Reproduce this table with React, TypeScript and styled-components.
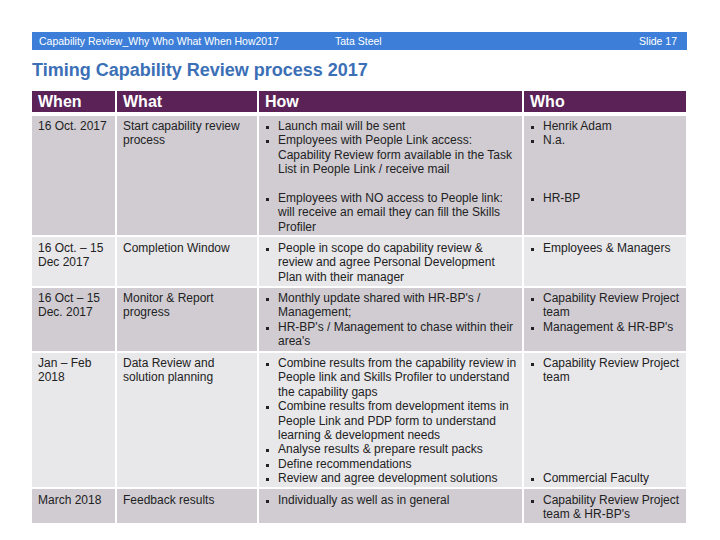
import React from "react";
import styled, { createGlobalStyle } from "styled-components";

const Global = createGlobalStyle`
  html, body { margin: 0; padding: 0; background: #ffffff; }
  body { font-family: "Liberation Sans", Arial, sans-serif; color: #222; }
`;

const Page = styled.div`
  width: 720px;
  height: 540px;
  box-sizing: border-box;
  padding: 32px 0 0 32px;
  display: flex;
  flex-direction: column;
`;

const TopBar = styled.div`
  width: 655px;
  height: 18px;
  background: #3d7fd8;
  color: #fff;
  font-size: 10.5px;
  display: flex;
  align-items: center;
  box-sizing: border-box;
  padding: 0 10px 0 7px;
`;

const BarLeft = styled.span`
  width: 296px;
`;

const BarMid = styled.span`
  flex: 1;
`;

const Title = styled.h1`
  margin: 9px 0 0 0;
  font-size: 18px;
  line-height: 22px;
  font-weight: bold;
  color: #3b6fb6;
`;

const Table = styled.div`
  margin-top: 10px;
  display: flex;
  flex-direction: column;
  gap: 2px;
  width: 654px;
`;

const Row = styled.div<{ $h: number; $head?: boolean }>`
  display: grid;
  grid-template-columns: 83px 140px 263px 162px;
  column-gap: 2px;
  height: ${(p) => p.$h}px;
  margin-bottom: ${(p) => (p.$head ? "2px" : "0")};
`;

const HeadCell = styled.div`
  background: #5b2258;
  color: #fff;
  font-size: 16px;
  font-weight: bold;
  display: flex;
  align-items: center;
  padding-left: 6px;
`;

const Cell = styled.div<{ $dark: boolean; $list?: boolean; $pad?: number }>`
  background: ${(p) => (p.$dark ? "#d0ccd2" : "#e8e7ea")};
  font-size: 12px;
  line-height: 14.4px;
  padding: ${(p) => p.$pad ?? 3}px 0 0 ${(p) => (p.$list ? "7px" : "6px")};
  white-space: nowrap;
  overflow: visible;
`;

const Group = styled.div<{ $lines?: number }>`
  min-height: ${(p) => (p.$lines ? p.$lines * 14.4 : 0)}px;
`;

const Item = styled.div`
  display: flex;
`;

const Marker = styled.span`
  flex: 0 0 12px;
  display: flex;
  padding-top: 7px;
  box-sizing: border-box;
  &::before {
    content: "";
    width: 3px;
    height: 3px;
    background: #222;
  }
`;

const Lines = ({ text }: { text: string }) => (
  <span>
    {text.split("|").map((l, i) => (
      <React.Fragment key={i}>
        {i > 0 && <br />}
        {l}
      </React.Fragment>
    ))}
  </span>
);

const Bullet = ({ text }: { text: string }) => (
  <Item>
    <Marker />
    <Lines text={text} />
  </Item>
);

export default function App() {
  return (
    <>
      <Global />
      <Page>
        <TopBar>
          <BarLeft>Capability Review_Why Who What When How2017</BarLeft>
          <BarMid>Tata Steel</BarMid>
          <span>Slide 17</span>
        </TopBar>
        <Title>Timing Capability Review process 2017</Title>
        <Table>
          <Row $h={21} $head>
            <HeadCell>When</HeadCell>
            <HeadCell>What</HeadCell>
            <HeadCell>How</HeadCell>
            <HeadCell>Who</HeadCell>
          </Row>

          <Row $h={119}>
            <Cell $dark>16 Oct. 2017</Cell>
            <Cell $dark>
              <Lines text="Start capability review|process" />
            </Cell>
            <Cell $dark $list>
              <Group $lines={5}>
                <Bullet text="Launch mail will be sent" />
                <Bullet text="Employees with People Link access:|Capability Review form available in the Task|List in People Link / receive mail" />
              </Group>
              <Group>
                <Bullet text="Employees with NO access to People link:|will receive an email they can fill the Skills|Profiler" />
              </Group>
            </Cell>
            <Cell $dark $list>
              <Group $lines={5}>
                <Bullet text="Henrik Adam" />
                <Bullet text="N.a." />
              </Group>
              <Group>
                <Bullet text="HR-BP" />
              </Group>
            </Cell>
          </Row>

          <Row $h={49}>
            <Cell $dark={false} $pad={4}>
              <Lines text="16 Oct. – 15|Dec 2017" />
            </Cell>
            <Cell $dark={false} $pad={4}>Completion Window</Cell>
            <Cell $dark={false} $list $pad={4}>
              <Bullet text="People in scope do capability review &|review and agree Personal Development|Plan with their manager" />
            </Cell>
            <Cell $dark={false} $list $pad={4}>
              <Bullet text="Employees & Managers" />
            </Cell>
          </Row>

          <Row $h={63}>
            <Cell $dark>
              <Lines text="16 Oct – 15|Dec. 2017" />
            </Cell>
            <Cell $dark>
              <Lines text="Monitor & Report|progress" />
            </Cell>
            <Cell $dark $list>
              <Bullet text="Monthly update shared with HR-BP's /|Management;" />
              <Bullet text="HR-BP's / Management to chase within their|area's" />
            </Cell>
            <Cell $dark $list>
              <Bullet text="Capability Review Project|team" />
              <Bullet text="Management & HR-BP's" />
            </Cell>
          </Row>

          <Row $h={134}>
            <Cell $dark={false}>
              <Lines text="Jan – Feb|2018" />
            </Cell>
            <Cell $dark={false}>
              <Lines text="Data Review and|solution planning" />
            </Cell>
            <Cell $dark={false} $list>
              <Bullet text="Combine results from the capability review in|People link and Skills Profiler to understand|the capability gaps" />
              <Bullet text="Combine results from development items in|People Link and PDP form to understand|learning & development needs" />
              <Bullet text="Analyse results  & prepare result packs" />
              <Bullet text="Define recommendations" />
              <Bullet text="Review and agree development solutions" />
            </Cell>
            <Cell $dark={false} $list>
              <Group $lines={8}>
                <Bullet text="Capability Review Project|team" />
              </Group>
              <Bullet text="Commercial Faculty" />
            </Cell>
          </Row>

          <Row $h={34}>
            <Cell $dark $pad={4}>March 2018</Cell>
            <Cell $dark $pad={4}>Feedback results</Cell>
            <Cell $dark $list $pad={4}>
              <Bullet text="Individually as well as in general" />
            </Cell>
            <Cell $dark $list $pad={4}>
              <Bullet text="Capability Review Project|team & HR-BP's" />
            </Cell>
          </Row>
        </Table>
      </Page>
    </>
  );
}
